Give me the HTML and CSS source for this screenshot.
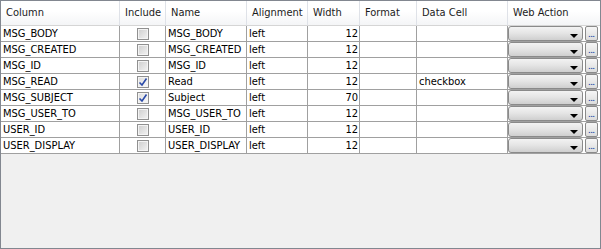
FILE: index.html
```html
<!DOCTYPE html>
<html lang="en">
<head>
  <meta charset="UTF-8">
  <title>Columns</title>
  <link rel="stylesheet" href="styles.css">
</head>
<body>
  <div class="panel">
    <div class="row head">
      <div class="cell">Column</div>
      <div class="cell">Include</div>
      <div class="cell">Name</div>
      <div class="cell">Alignment</div>
      <div class="cell">Width</div>
      <div class="cell">Format</div>
      <div class="cell">Data Cell</div>
      <div class="cell">Web Action</div>
    </div>

    <div class="row">
      <div class="cell">MSG_BODY</div>
      <div class="cell check"><span class="box"></span></div>
      <div class="cell">MSG_BODY</div>
      <div class="cell">left</div>
      <div class="cell num">12</div>
      <div class="cell"></div>
      <div class="cell"></div>
      <div class="cell action"><span class="combo"><span class="arrow"></span></span><span class="more">...</span></div>
    </div>
    <div class="row">
      <div class="cell">MSG_CREATED</div>
      <div class="cell check"><span class="box"></span></div>
      <div class="cell">MSG_CREATED</div>
      <div class="cell">left</div>
      <div class="cell num">12</div>
      <div class="cell"></div>
      <div class="cell"></div>
      <div class="cell action"><span class="combo"><span class="arrow"></span></span><span class="more">...</span></div>
    </div>
    <div class="row">
      <div class="cell">MSG_ID</div>
      <div class="cell check"><span class="box"></span></div>
      <div class="cell">MSG_ID</div>
      <div class="cell">left</div>
      <div class="cell num">12</div>
      <div class="cell"></div>
      <div class="cell"></div>
      <div class="cell action"><span class="combo"><span class="arrow"></span></span><span class="more">...</span></div>
    </div>
    <div class="row">
      <div class="cell">MSG_READ</div>
      <div class="cell check"><span class="box checked"><svg width="10" height="10" viewBox="0 0 10 10"><path d="M1.5 5.5 L4 8 L8.5 1.5" fill="none" stroke="#2a4aa8" stroke-width="1.6"/></svg></span></div>
      <div class="cell">Read</div>
      <div class="cell">left</div>
      <div class="cell num">12</div>
      <div class="cell"></div>
      <div class="cell">checkbox</div>
      <div class="cell action"><span class="combo"><span class="arrow"></span></span><span class="more">...</span></div>
    </div>
    <div class="row">
      <div class="cell">MSG_SUBJECT</div>
      <div class="cell check"><span class="box checked"><svg width="10" height="10" viewBox="0 0 10 10"><path d="M1.5 5.5 L4 8 L8.5 1.5" fill="none" stroke="#2a4aa8" stroke-width="1.6"/></svg></span></div>
      <div class="cell">Subject</div>
      <div class="cell">left</div>
      <div class="cell num">70</div>
      <div class="cell"></div>
      <div class="cell"></div>
      <div class="cell action"><span class="combo"><span class="arrow"></span></span><span class="more">...</span></div>
    </div>
    <div class="row">
      <div class="cell">MSG_USER_TO</div>
      <div class="cell check"><span class="box"></span></div>
      <div class="cell">MSG_USER_TO</div>
      <div class="cell">left</div>
      <div class="cell num">12</div>
      <div class="cell"></div>
      <div class="cell"></div>
      <div class="cell action"><span class="combo"><span class="arrow"></span></span><span class="more">...</span></div>
    </div>
    <div class="row">
      <div class="cell">USER_ID</div>
      <div class="cell check"><span class="box"></span></div>
      <div class="cell">USER_ID</div>
      <div class="cell">left</div>
      <div class="cell num">12</div>
      <div class="cell"></div>
      <div class="cell"></div>
      <div class="cell action"><span class="combo"><span class="arrow"></span></span><span class="more">...</span></div>
    </div>
    <div class="row">
      <div class="cell">USER_DISPLAY</div>
      <div class="cell check"><span class="box"></span></div>
      <div class="cell">USER_DISPLAY</div>
      <div class="cell">left</div>
      <div class="cell num">12</div>
      <div class="cell"></div>
      <div class="cell"></div>
      <div class="cell action"><span class="combo"><span class="arrow"></span></span><span class="more">...</span></div>
    </div>
  </div>
</body>
</html>
```

FILE: styles.css
```css
body {
  margin: 0;
  font-family: "DejaVu Sans Condensed", "DejaVu Sans", sans-serif;
  font-stretch: condensed;
  font-size: 11px;
  color: #000;
}
.panel {
  box-sizing: border-box;
  width: 601px;
  height: 249px;
  border: 1px solid #828790;
  background-color: #f0f0f0;
}
.row {
  display: grid;
  grid-template-columns: 119px 46px 81px 61px 52px 57px 91px 92px;
  height: 16px;
  background-color: white;
}
.cell {
  box-sizing: border-box;
  border-right: 1px solid #a0a0a0;
  border-bottom: 1px solid #a0a0a0;
  padding: 0 2px;
  line-height: 15px;
  white-space: nowrap;
  overflow: hidden;
}
.cell:last-child {
  border-right: none;
}
.head {
  height: 25px;
  background: linear-gradient(#ffffff, #ffffff 40%, #f3f4f6);
}
.head .cell {
  line-height: 24px;
  padding-left: 5px;
  border-right-color: #dfe2e8;
  border-bottom-color: #d5d5d5;
  color: #1b1b1b;
}
.num {
  text-align: right;
  padding-right: 1px;
}
.check {
  display: flex;
  justify-content: center;
  align-items: center;
}
.box {
  box-sizing: border-box;
  width: 12px;
  height: 12px;
  margin-top: 1px;
  border: 1px solid #909090;
  background: linear-gradient(135deg, #cdcdcd, #f4f4f4);
  box-shadow: inset 0 0 0 1px #f4f4f4;
  display: flex;
  align-items: center;
  justify-content: center;
}
.box.checked {
  background: linear-gradient(135deg, #dcdcdc, #fafafa);
}
.action {
  display: flex;
  align-items: stretch;
  padding: 0 2px 0 0;
  gap: 2px;
}
.combo {
  position: relative;
  box-sizing: border-box;
  width: 75px;
  border: 1px solid #8a8a8a;
  border-radius: 3px;
  background: linear-gradient(#f3f3f3, #e4e4e4 50%, #cfcfcf);
}
.arrow {
  position: absolute;
  right: 4px;
  bottom: 2px;
  width: 0;
  height: 0;
  border-left: 4px solid transparent;
  border-right: 4px solid transparent;
  border-top: 4px solid #000;
}
.more {
  box-sizing: border-box;
  width: 13px;
  border: 1px solid #8a8a8a;
  border-radius: 2px;
  background: linear-gradient(#f6f6f6, #dcdcdc);
  font-family: "Liberation Sans", sans-serif;
  font-stretch: normal;
  font-size: 8px;
  font-weight: bold;
  line-height: 15px;
  text-align: center;
  color: #2a4aa8;
  overflow: hidden;
}
```
